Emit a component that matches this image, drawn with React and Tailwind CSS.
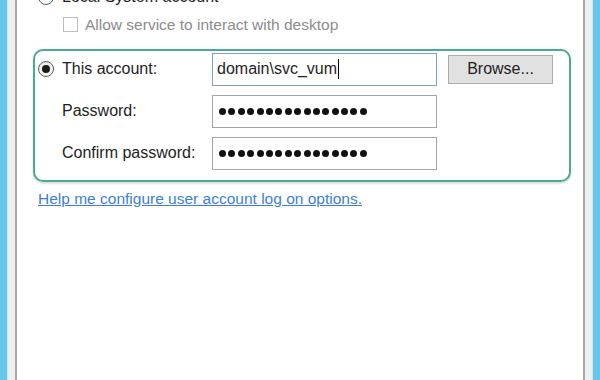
const DOTS = Array.from({ length: 16 });

function Radio({ checked, className = "" }) {
  return (
    <span
      className={`flex h-[16px] w-[16px] shrink-0 items-center justify-center rounded-full border border-[#5a5a5a] bg-gradient-to-b from-[#e8e8e8] to-white ${className}`}
    >
      {checked && <span className="h-[8px] w-[8px] rounded-full bg-[#1a1a1a]" />}
    </span>
  );
}

function PasswordBox() {
  return (
    <div className="flex h-[33px] w-[225px] items-center gap-[2.4px] border border-[#a5a5a5] bg-white pl-[6px]">
      {DOTS.map((_, i) => (
        <span key={i} className="h-[7px] w-[7px] rounded-full bg-[#111]" />
      ))}
    </div>
  );
}

export default function App() {
  return (
    <div
      className="flex h-[380px] w-[600px] overflow-hidden bg-white text-[#1e1e1e]"
      style={{ fontFamily: '"Liberation Sans", Arial, sans-serif' }}
    >
      <div className="w-[7px] bg-[#68c6ea]" />
      <div className="w-[8px] border-l border-[#cfeaf5] bg-[#eef0f0]" />
      <div className="w-[2px] bg-[#a8a8a8]" />

      <main className="flex flex-1 flex-col pl-[16px]">
        {/* Local System account (cut off at top) */}
        <div className="-mt-[11px] flex h-[16px] items-center gap-[8px] pl-[5px]">
          <Radio />
          <span className="text-[16px] leading-none">Local System account</span>
        </div>

        <div className="mt-[12px] flex items-center gap-[7px] pl-[30px]">
          <span className="h-[15px] w-[15px] border border-[#bcbcbc] bg-white" />
          <span className="text-[15.5px] leading-none text-[#8c8c8c]">
            Allow service to interact with desktop
          </span>
        </div>

        {/* Group box */}
        <div className="mt-[16px] flex h-[133px] w-[538px] flex-col gap-[9px] rounded-[10px] border-2 border-[#48aa8e] pt-[2px] shadow-[0_2px_2px_rgba(0,0,0,0.12)]">
          <div className="flex items-center">
            <div className="flex w-[177px] items-center gap-[8px] pl-[3px]">
              <Radio checked />
              <span className="text-[16px] leading-none">This account:</span>
            </div>
            <div className="flex h-[33px] w-[225px] items-center border border-[#7f9fc4] bg-white pl-[4px] text-[16px]">
              <span>domain\svc_vum</span>
              <span className="ml-[1px] h-[20px] w-[1px] bg-black" />
            </div>
            <button className="ml-[11px] flex h-[29px] w-[105px] items-center justify-center border border-[#adadad] bg-[#e1e1e1] text-[16px] text-[#222]">
              Browse...
            </button>
          </div>

          <div className="flex items-center">
            <span className="w-[177px] pl-[27px] text-[16px] leading-none">Password:</span>
            <PasswordBox />
          </div>

          <div className="flex items-center">
            <span className="w-[177px] pl-[27px] text-[16px] leading-none">Confirm password:</span>
            <PasswordBox />
          </div>
        </div>

        <a className="mt-[9px] ml-[5px] text-[15.5px] leading-none text-[#3d7fd6] underline">
          Help me configure user account log on options.
        </a>
      </main>

      <div className="w-[2px] bg-[#a8a8a8]" />
      <div className="w-[8px] border-r border-[#cfeaf5] bg-[#eef0f0]" />
      <div className="w-[7px] bg-[#68c6ea]" />
    </div>
  );
}
